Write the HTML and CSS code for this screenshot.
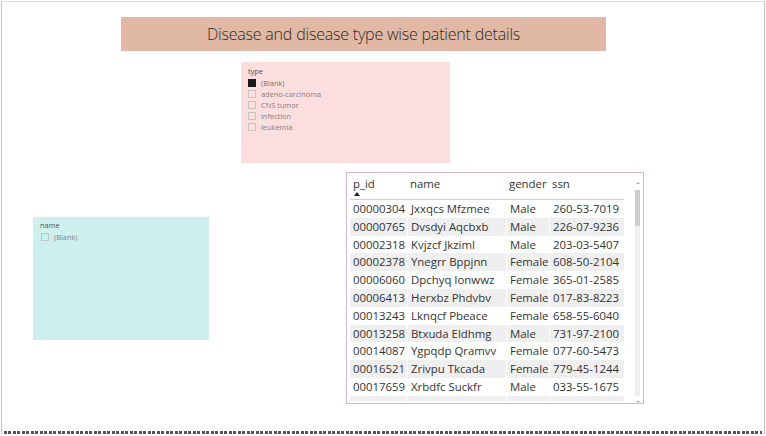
FILE: index.html
```html
<!DOCTYPE html>
<html lang="en">
<head>
<meta charset="utf-8">
<title>Disease and disease type wise patient details</title>
<link rel="stylesheet" href="styles.css">
</head>
<body>
<div class="canvas">
  <div class="visual title-banner">Disease and disease type wise patient details</div>

  <div class="visual slicer slicer-type">
    <div class="slicer-label">type</div>
    <ul class="slicer-list">
      <li class="slicer-item selected"><span class="box"></span>(Blank)</li>
      <li class="slicer-item"><span class="box"></span>adeno-carcinoma</li>
      <li class="slicer-item"><span class="box"></span>CNS tumor</li>
      <li class="slicer-item"><span class="box"></span>infection</li>
      <li class="slicer-item"><span class="box"></span>leukemia</li>
    </ul>
  </div>

  <div class="visual slicer slicer-name">
    <div class="slicer-label">name</div>
    <ul class="slicer-list">
      <li class="slicer-item"><span class="box"></span>(Blank)</li>
    </ul>
  </div>

  <div class="visual table-visual">
    <div class="table-clip">
      <table class="grid">
        <thead>
          <tr>
            <th class="c1">p_id<span class="sort-arrow"></span></th>
            <th class="c2">name</th>
            <th class="c3">gender</th>
            <th class="c4">ssn</th>
          </tr>
        </thead>
        <tbody>
          <tr><td>00000304</td><td>Jxxqcs Mfzmee</td><td>Male</td><td>260-53-7019</td></tr>
          <tr><td>00000765</td><td>Dvsdyi Aqcbxb</td><td>Male</td><td>226-07-9236</td></tr>
          <tr><td>00002318</td><td>Kvjzcf Jkziml</td><td>Male</td><td>203-03-5407</td></tr>
          <tr><td>00002378</td><td>Ynegrr Bppjnn</td><td>Female</td><td>608-50-2104</td></tr>
          <tr><td>00006060</td><td>Dpchyq Ionwwz</td><td>Female</td><td>365-01-2585</td></tr>
          <tr><td>00006413</td><td>Herxbz Phdvbv</td><td>Female</td><td>017-83-8223</td></tr>
          <tr><td>00013243</td><td>Lknqcf Pbeace</td><td>Female</td><td>658-55-6040</td></tr>
          <tr><td>00013258</td><td>Btxuda Eldhmg</td><td>Male</td><td>731-97-2100</td></tr>
          <tr><td>00014087</td><td>Ygpqdp Qramvv</td><td>Female</td><td>077-60-5473</td></tr>
          <tr><td>00016521</td><td>Zrivpu Tkcada</td><td>Female</td><td>779-45-1244</td></tr>
          <tr><td>00017659</td><td>Xrbdfc Suckfr</td><td>Male</td><td>033-55-1675</td></tr>
          <tr><td>00021770</td><td>Qlrxbw Okjhyv</td><td>Female</td><td>486-19-3071</td></tr>
        </tbody>
      </table>
    </div>
    <div class="scrollbar">
      <span class="arrow up"></span>
      <div class="track"><div class="thumb"></div></div>
      <span class="arrow down"></span>
    </div>
  </div>

  <div class="page-edge"></div>
</div>
</body>
</html>
```

FILE: styles.css
```css
html, body {
  margin: 0;
  padding: 0;
  background: #ffffff;
}

.canvas {
  position: relative;
  width: 766px;
  height: 436px;
  overflow: hidden;
  font-family: "Open Sans", "Noto Sans", sans-serif;
  color: #333;
}

.canvas::before {
  content: "";
  position: absolute;
  left: 1px;
  top: 1px;
  width: 764px;
  height: 433px;
  box-sizing: border-box;
  border-top: 1px solid #dedede;
  border-left: 1px solid #c4c4c4;
  border-right: 1px solid #c4c4c4;
}

.page-edge {
  position: absolute;
  left: 4px;
  top: 431px;
  width: 758px;
  height: 3px;
  background: repeating-linear-gradient(90deg, #555 0 2.7px, transparent 2.7px 4.5px);
}

.visual {
  position: absolute;
  box-sizing: border-box;
}

/* Title */
.title-banner {
  left: 121px;
  top: 17px;
  width: 485px;
  height: 34px;
  background: #e0b8a5;
  display: flex;
  align-items: center;
  justify-content: center;
  font-family: "Open Sans", sans-serif;
  font-weight: 300;
  font-size: 16px;
  color: #2b2b2b;
  letter-spacing: -0.2px;
}

/* Slicers */
.slicer {
  padding: 5px 7px;
  font-size: 7.4px;
  color: #808080;
}
.slicer-type {
  left: 241px;
  top: 62px;
  width: 209px;
  height: 101px;
  background: #fcdede;
}
.slicer-name {
  left: 33px;
  top: 217px;
  width: 176px;
  height: 123px;
  background: #cdf0ee;
  padding-top: 4px;
}
.slicer-label {
  color: #505050;
  line-height: 8px;
  height: 8px;
  margin-bottom: 2px;
}
.slicer-list {
  list-style: none;
  margin: 0;
  padding: 0;
}
.slicer-item {
  display: flex;
  align-items: center;
  height: 11.2px;
  gap: 5px;
}
.box {
  width: 8px;
  height: 8px;
  box-sizing: border-box;
  border: 1px solid #c6c6c6;
  flex: none;
}
.slicer-item.selected .box {
  background: #1a1a1a;
  border-color: #1a1a1a;
}
.slicer-item.selected {
  color: #707070;
}
.slicer-name .slicer-item .box {
  margin-left: 1px;
}

/* Table */
.table-visual {
  left: 346px;
  top: 172px;
  width: 298px;
  height: 232px;
  border: 1px solid #d3b6d3;
  background: #fff;
  display: flex;
}
.table-clip {
  padding: 0 0 0 3px;
  height: 228px;
  overflow: hidden;
  flex: none;
}
.grid {
  border-collapse: separate;
  border-spacing: 0;
  table-layout: fixed;
  width: 274px;
  font-family: "Open Sans", sans-serif;
  font-size: 11.4px;
  color: #333;
}
.grid th,
.grid td {
  box-sizing: border-box;
}
.grid th {
  font-weight: 400;
  text-align: left;
  height: 27px;
  padding: 0 0 0 3px;
  vertical-align: top;
  line-height: 21px;
  border-bottom: 1px solid #a9dfdc;
  position: relative;
}
.grid th.c1 { width: 57px; }
.grid th.c2 { width: 99px; }
.grid th.c3 { width: 43px; }
.grid th.c4 { width: 75px; }
.sort-arrow {
  position: absolute;
  left: 4px;
  top: 19px;
  width: 0;
  height: 0;
  border-left: 3.5px solid transparent;
  border-right: 3.5px solid transparent;
  border-bottom: 4px solid #222;
}
.grid td {
  height: 17.8px;
  padding: 0 0 0 3px;
  line-height: 17.8px;
  white-space: nowrap;
  overflow: hidden;
  border-left: 1px solid #fff;
}
.grid td:first-child {
  border-left: 0;
}
.grid tbody tr:nth-child(even) td {
  background: #efefef;
}

.scrollbar {
  margin-left: 11px;
  width: 5px;
  display: flex;
  flex-direction: column;
  align-items: center;
  padding-top: 9px;
}
.arrow {
  width: 0;
  height: 0;
  border-left: 2px solid transparent;
  border-right: 2px solid transparent;
}
.arrow.up { border-bottom: 2px solid #b0b0b0; }
.arrow.down { border-top: 2px solid #b0b0b0; }
.track {
  width: 5px;
  height: 207px;
  background: #f0f0f0;
  margin: 6px 0 5px;
}
.thumb {
  height: 36px;
  background: #cdcdcd;
}
```
